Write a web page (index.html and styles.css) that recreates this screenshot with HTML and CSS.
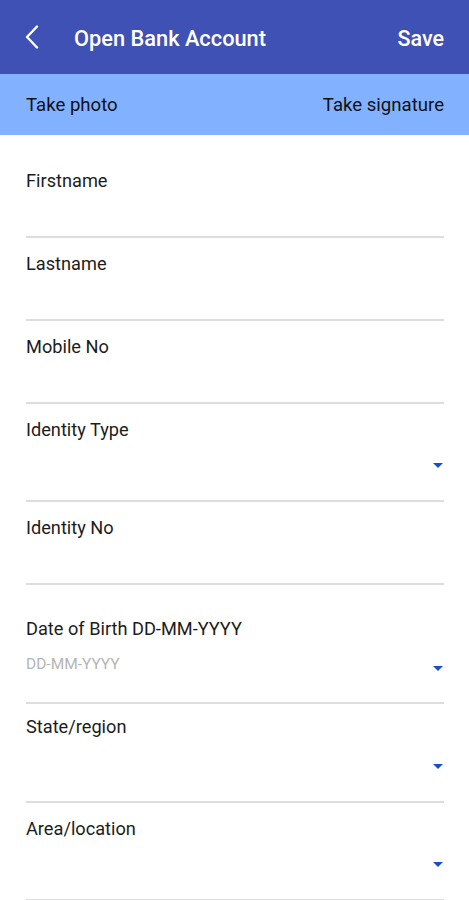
FILE: index.html
```html
<!DOCTYPE html>
<html lang="en">
<head>
    <meta charset="UTF-8">
    <meta name="viewport" content="width=device-width, initial-scale=1.0">
    <title>Open Bank Account</title>
    <link rel="stylesheet" href="styles.css">
</head>
<body>

    <!-- App Bar -->
    <div class="app-bar">
        <span class="back-btn">
            <svg width="16" height="24" viewBox="0 0 16 24">
                <path d="M13 1.5 L3 12 L13 22.5" fill="none" stroke="#ffffff" stroke-width="2.4" stroke-linecap="round" stroke-linejoin="round"/>
            </svg>
        </span>
        <span class="title">Open Bank Account</span>
        <span class="save-btn">Save</span>
    </div>

    <!-- Photo / Signature Bar -->
    <div class="capture-bar">
        <span>Take photo</span>
        <span>Take signature</span>
    </div>

    <!-- Form -->
    <form class="account-form">
        <div class="field first">
            <label>Firstname</label>
            <div class="input-area"></div>
        </div>
        <div class="field">
            <label>Lastname</label>
            <div class="input-area"></div>
        </div>
        <div class="field">
            <label>Mobile No</label>
            <div class="input-area"></div>
        </div>
        <div class="field select">
            <label>Identity Type</label>
            <div class="input-area"><span class="arrow"></span></div>
        </div>
        <div class="field">
            <label>Identity No</label>
            <div class="input-area"></div>
        </div>
        <div class="field select date">
            <label>Date of Birth DD-MM-YYYY</label>
            <div class="input-area">
                <span class="placeholder">DD-MM-YYYY</span>
                <span class="arrow"></span>
            </div>
        </div>
        <div class="field select region">
            <label>State/region</label>
            <div class="input-area"><span class="arrow"></span></div>
        </div>
        <div class="field select">
            <label>Area/location</label>
            <div class="input-area"><span class="arrow"></span></div>
        </div>
    </form>

</body>
</html>
```

FILE: styles.css
```css
/* General Styles */
body {
    font-family: Roboto, "Noto Sans", sans-serif;
    background-color: #ffffff;
    margin: 0;
    padding: 0;
    color: #1c1c1c;
}

/* App Bar */
.app-bar {
    height: 74px;
    background-color: #3f51b5;
    color: #ffffff;
    display: flex;
    align-items: center;
    padding: 3px 25px 0 24px;
    box-sizing: border-box;
}

.back-btn {
    display: flex;
    width: 50px;
    margin-top: -3px;
}

.title {
    font-size: 21.8px;
    font-weight: 500;
    flex: 1;
}

.save-btn {
    font-size: 21.5px;
    font-weight: 500;
}

/* Capture Bar */
.capture-bar {
    height: 61px;
    background-color: #82b1ff;
    display: flex;
    justify-content: space-between;
    align-items: center;
    padding: 0 25px 0 26px;
    font-size: 18.6px;
    color: #111111;
}

/* Form */
.account-form {
    padding: 0 25px 0 26px;
}

.field {
    border-bottom: 2px solid #dddddd;
    padding-top: 16px;
}

.field.first {
    padding-top: 36px;
}

.field.date {
    padding-top: 34px;
}

.field.region {
    padding-top: 13px;
}

.field label {
    display: block;
    font-size: 18.2px;
    line-height: 20px;
    color: #1c1c1c;
}

.input-area {
    height: 45px;
    display: flex;
    align-items: center;
    justify-content: space-between;
}

.select .input-area {
    height: 60px;
    align-items: flex-start;
}

.region .input-area {
    height: 64px;
}

.date .input-area {
    height: 63px;
}

.placeholder {
    font-size: 15.5px;
    line-height: 18px;
    color: #b5b5b5;
    margin-top: 16px;
}

.arrow {
    width: 0;
    height: 0;
    border-left: 5.5px solid transparent;
    border-right: 5.5px solid transparent;
    border-top: 5.5px solid #1a4fc4;
    margin-left: auto;
    margin-right: 1px;
    margin-top: 23px;
}

.region .arrow,
.date .arrow {
    margin-top: 27px;
}
```
